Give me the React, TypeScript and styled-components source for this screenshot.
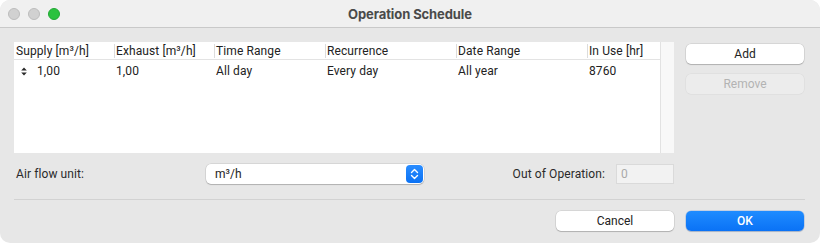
import React from 'react'
import styled, { createGlobalStyle } from 'styled-components'

const GlobalStyle = createGlobalStyle`
  html, body {
    margin: 0;
    padding: 0;
    background: #ffffff;
  }
  body {
    font-family: Roboto, "Liberation Sans", sans-serif;
    -webkit-font-smoothing: antialiased;
  }
`

const Window = styled.div`
  width: 820px;
  height: 243px;
  box-sizing: border-box;
  background: #e7e7e7;
  border-radius: 10px;
  overflow: hidden;
  display: flex;
  flex-direction: column;
`

const TitleBar = styled.div`
  height: 28px;
  box-sizing: border-box;
  background: #f0f0f0;
  border-bottom: 1px solid #c9c9c9;
  display: grid;
  grid-template-columns: 1fr auto 1fr;
  align-items: center;
  padding: 0 8px;
`

const Lights = styled.div`
  display: flex;
  gap: 8px;
`

const Light = styled.span<{ $color: string; $ring: string }>`
  width: 12px;
  height: 12px;
  border-radius: 50%;
  box-sizing: border-box;
  background: ${(p) => p.$color};
  border: 1px solid ${(p) => p.$ring};
`

const Title = styled.div`
  font-family: Inter, "Liberation Sans", sans-serif;
  font-size: 13px;
  font-weight: 700;
  color: #4a4a4a;
  letter-spacing: -0.1px;
`

const Body = styled.div`
  flex: 1;
  padding: 14px 16px 0 14px;
  display: flex;
  flex-direction: column;
`

const MainRow = styled.div`
  display: flex;
  gap: 12px;
`

const LeftColumn = styled.div`
  width: 660px;
  display: flex;
  flex-direction: column;
`

const Table = styled.div`
  height: 111px;
  background: #ffffff;
  display: flex;
`

const Grid = styled.div`
  flex: 1;
  display: flex;
  flex-direction: column;
`

const Scroller = styled.div`
  width: 13px;
  background: #f8f8f8;
  border-left: 1px solid #e2e2e2;
`

const Columns = '100px 100px 111px 131px 131px 71px 1fr'

const HeaderRow = styled.div`
  height: 17px;
  display: grid;
  grid-template-columns: ${Columns};
  border-bottom: 1px solid #e3e3e3;
  align-items: center;
`

const HeaderCell = styled.div<{ $sep?: boolean }>`
  font-size: 12px;
  color: #222;
  padding-left: ${(p) => (p.$sep ? '1px' : '2px')};
  border-left: ${(p) => (p.$sep ? '1px solid #dcdcdc' : 'none')};
  line-height: 14px;
  white-space: nowrap;
  letter-spacing: 0.1px;
`

const DataRow = styled.div`
  height: 22px;
  display: grid;
  grid-template-columns: ${Columns};
  align-items: center;
`

const Cell = styled.div`
  font-size: 12px;
  color: #222;
  padding-left: 2px;
  white-space: nowrap;
  display: flex;
  align-items: center;
  letter-spacing: 0.1px;
`

const Sorter = styled.span`
  width: 21px;
  padding-left: 5px;
  box-sizing: border-box;
  display: flex;
  align-items: center;
`

const SideButtons = styled.div`
  width: 118px;
  display: flex;
  flex-direction: column;
  gap: 10px;
  padding-top: 2px;
`

const Button = styled.button<{ $primary?: boolean }>`
  height: 20px;
  width: 118px;
  border: none;
  border-radius: 5px;
  font-family: inherit;
  font-size: 12px;
  padding: 0;
  cursor: default;
  color: ${(p) => (p.$primary ? '#ffffff' : '#222')};
  font-weight: ${(p) => (p.$primary ? 500 : 400)};
  background: ${(p) =>
    p.$primary ? 'linear-gradient(#1f8cff, #0a72f5)' : '#ffffff'};
  box-shadow: ${(p) =>
    p.$primary
      ? '0 0 0 0.5px rgba(0,80,200,0.3), 0 1px 1px rgba(0,0,0,0.15)'
      : '0 0 0 0.5px rgba(0,0,0,0.14), 0 1px 1px rgba(0,0,0,0.18)'};

  &:disabled {
    background: #ececec;
    color: #b3b3b3;
    box-shadow: 0 0 0 0.5px rgba(0, 0, 0, 0.06);
  }
`

const OptionsRow = styled.div`
  display: flex;
  align-items: center;
  height: 20px;
  margin-top: 11px;
`

const Label = styled.span<{ $width?: number; $right?: boolean }>`
  font-size: 12px;
  color: #2a2a2a;
  width: ${(p) => (p.$width ? `${p.$width}px` : 'auto')};
  text-align: ${(p) => (p.$right ? 'right' : 'left')};
  padding-left: ${(p) => (p.$right ? '0' : '2px')};
  box-sizing: border-box;
  flex-shrink: 0;
  letter-spacing: 0.1px;
`

const Select = styled.div`
  width: 218px;
  height: 20px;
  box-sizing: border-box;
  background: #ffffff;
  border-radius: 5px;
  box-shadow: 0 0 0 0.5px rgba(0, 0, 0, 0.14), 0 1px 1px rgba(0, 0, 0, 0.18);
  display: flex;
  align-items: center;
  justify-content: space-between;
  padding: 0 1px 0 9px;
  font-size: 12px;
  color: #222;
`

const Stepper = styled.span`
  width: 17px;
  height: 18px;
  border-radius: 4px;
  background: linear-gradient(#2a8dff, #0b72f4);
  display: flex;
  align-items: center;
  justify-content: center;
`

const Spacer = styled.div`
  flex: 1;
`

const TextInput = styled.div`
  width: 58px;
  height: 20px;
  box-sizing: border-box;
  margin-left: 11px;
  background: #f2f2f2;
  border: 1px solid #dadada;
  font-size: 12px;
  color: #a9a9a9;
  padding-left: 4px;
  display: flex;
  align-items: center;
`

const Divider = styled.div`
  height: 1px;
  width: 791px;
  background: #d2d2d2;
  margin-top: 15px;
`

const Footer = styled.div`
  display: flex;
  justify-content: flex-end;
  gap: 12px;
  margin-top: 11px;
`

const headers = [
  'Supply [m³/h]',
  'Exhaust [m³/h]',
  'Time Range',
  'Recurrence',
  'Date Range',
  'In Use [hr]',
  '',
]

const App: React.FC = () => (
  <>
    <GlobalStyle />
    <Window>
      <TitleBar>
        <Lights>
          <Light $color="#d1d1d1" $ring="#bcbcbc" />
          <Light $color="#d1d1d1" $ring="#bcbcbc" />
          <Light $color="#2bc23f" $ring="#22a834" />
        </Lights>
        <Title>Operation Schedule</Title>
        <div />
      </TitleBar>
      <Body>
        <MainRow>
          <LeftColumn>
            <Table>
              <Grid>
                <HeaderRow>
                  {headers.map((h, i) => (
                    <HeaderCell key={i} $sep={i > 0}>
                      {h}
                    </HeaderCell>
                  ))}
                </HeaderRow>
                <DataRow>
                  <Cell>
                    <Sorter>
                      <svg width="6" height="9" viewBox="0 0 6 9">
                        <path d="M3 0.5 L5.8 3.5 H0.2 Z M3 8.5 L5.8 5.5 H0.2 Z" fill="#2a2a2a" />
                      </svg>
                    </Sorter>
                    1,00
                  </Cell>
                  <Cell>1,00</Cell>
                  <Cell>All day</Cell>
                  <Cell>Every day</Cell>
                  <Cell>All year</Cell>
                  <Cell>8760</Cell>
                  <Cell />
                </DataRow>
              </Grid>
              <Scroller />
            </Table>
            <OptionsRow>
              <Label $width={192}>Air flow unit:</Label>
              <Select>
                m³/h
                <Stepper>
                  <svg width="9" height="12" viewBox="0 0 9 12" fill="none">
                    <path
                      d="M1.5 4.5 L4.5 1.5 L7.5 4.5 M1.5 7.5 L4.5 10.5 L7.5 7.5"
                      stroke="#fff"
                      strokeWidth="1.4"
                      strokeLinecap="round"
                      strokeLinejoin="round"
                    />
                  </svg>
                </Stepper>
              </Select>
              <Spacer />
              <Label $right>Out of Operation:</Label>
              <TextInput>0</TextInput>
            </OptionsRow>
          </LeftColumn>
          <SideButtons>
            <Button>Add</Button>
            <Button disabled>Remove</Button>
          </SideButtons>
        </MainRow>
        <Divider />
        <Footer>
          <Button>Cancel</Button>
          <Button $primary>OK</Button>
        </Footer>
      </Body>
    </Window>
  </>
)

export default App
